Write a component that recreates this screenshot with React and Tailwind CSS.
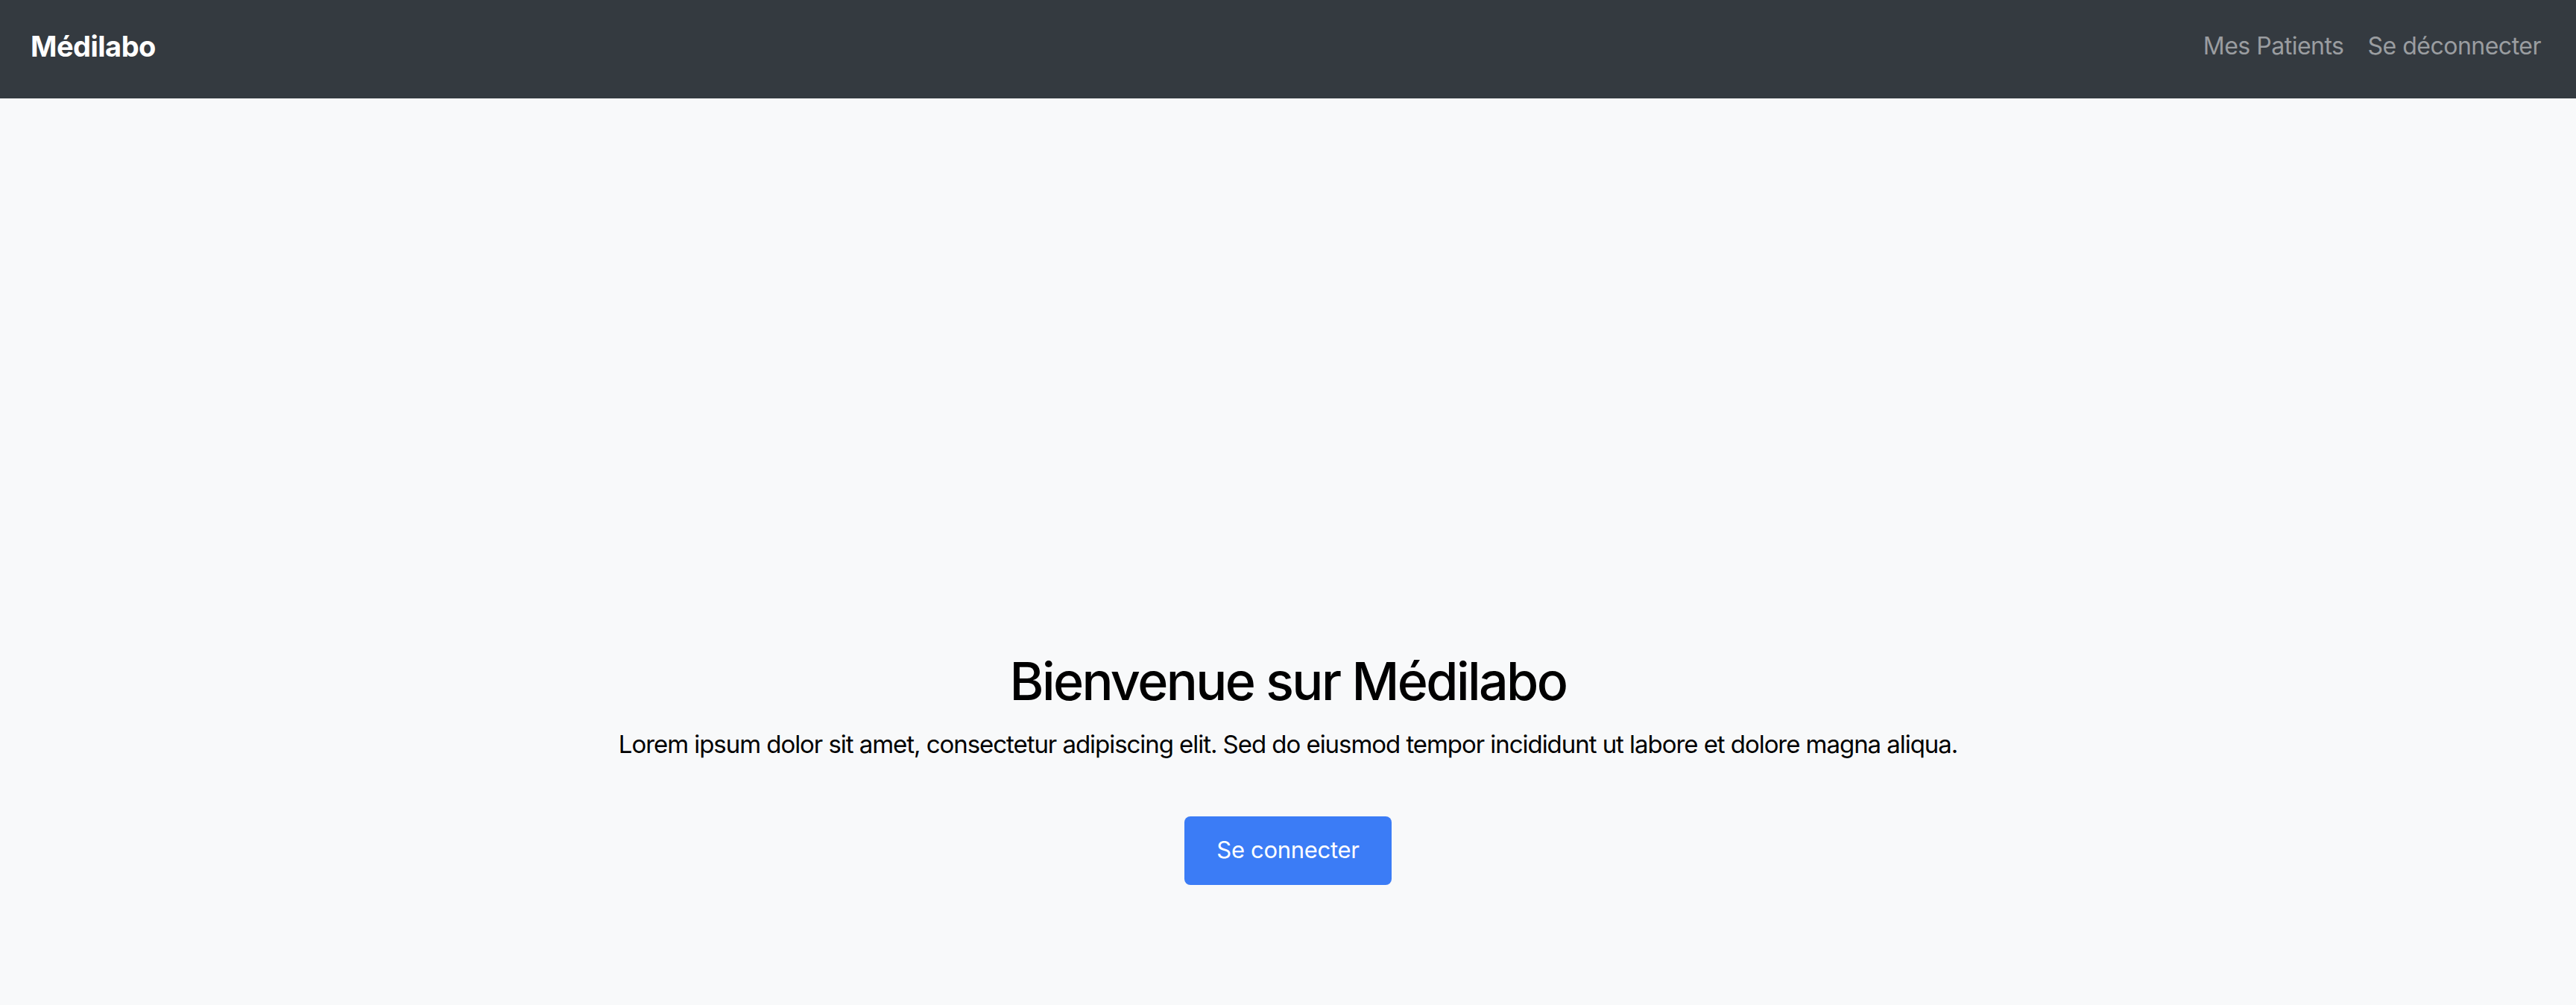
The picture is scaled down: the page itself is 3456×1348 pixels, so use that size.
import React from 'react';

const App = () => {
    return (
        <div className="min-h-screen flex flex-col bg-[#f8f9fa]" style={{ fontFamily: 'Inter, "Liberation Sans", sans-serif' }}>
            <nav className="h-[132px] bg-[#343a40] flex items-center justify-between pl-[41px] pr-[31px] pb-[8px]">
                <a href="#" className="text-white font-bold text-[38px] tracking-[-0.5px]">Médilabo</a>
                <ul className="flex items-center">
                    <li><a href="#" className="px-[16px] text-[32px] text-[#9a9da0] tracking-[-0.5px]">Mes Patients</a></li>
                    <li><a href="#" className="px-[16px] text-[32px] text-[#9a9da0] tracking-[-0.5px]">Se déconnecter</a></li>
                </ul>
            </nav>

            <main className="flex-1 flex flex-col items-center pt-[740px] text-center">
                <h1 className="text-[70px] leading-[1.2] font-medium tracking-[-2.6px] text-black">Bienvenue sur Médilabo</h1>
                <p className="text-[33px] leading-[1.5] tracking-[-1.05px] text-black mt-[18px]">
                    Lorem ipsum dolor sit amet, consectetur adipiscing elit. Sed do eiusmod tempor incididunt ut labore et dolore magna aliqua.
                </p>
                <button className="mt-[71px] w-[278px] h-[92px] rounded-[8px] bg-[#3b7cf6] text-white text-[31px] tracking-[-0.3px]">
                    Se connecter
                </button>
            </main>
        </div>
    );
};

export default App;
